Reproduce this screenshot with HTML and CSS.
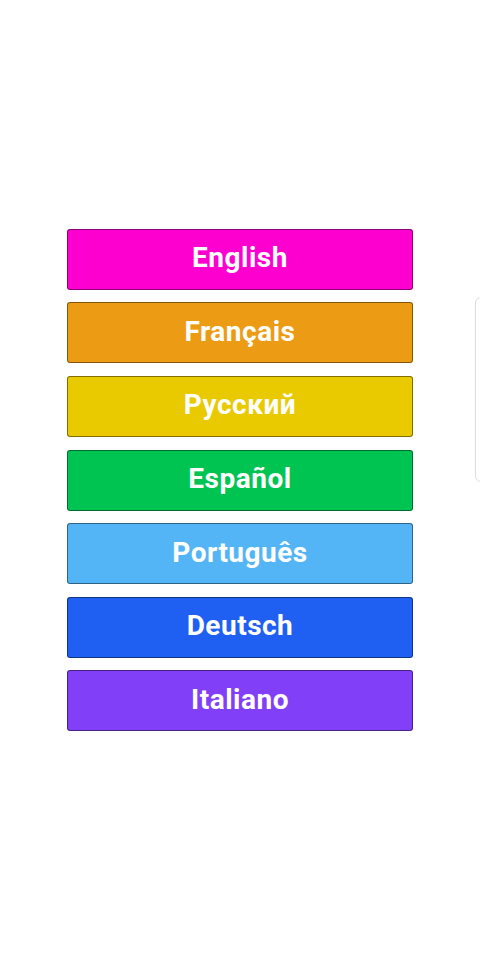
FILE: index.html
```html
<!DOCTYPE html>
<html lang="en">
<head>
    <meta charset="UTF-8">
    <meta name="viewport" content="width=device-width, initial-scale=1.0">
    <title>Language</title>
    <link rel="stylesheet" href="styles.css">
</head>
<body>
    <!-- language list -->
    <div class="lang-list">
        <a href="#" class="lang-btn pink">English</a>
        <a href="#" class="lang-btn orange">Français</a>
        <a href="#" class="lang-btn yellow">Русский</a>
        <a href="#" class="lang-btn green">Español</a>
        <a href="#" class="lang-btn sky">Português</a>
        <a href="#" class="lang-btn blue">Deutsch</a>
        <a href="#" class="lang-btn purple">Italiano</a>
    </div>

    <!-- edge panel handle -->
    <div class="edge-handle"></div>
</body>
</html>
```

FILE: styles.css
```css
body {
    font-family: Roboto, "Liberation Sans", Arial, sans-serif;
    margin: 0;
    padding: 0;
    background-color: #fff;
    height: 960px;
    overflow: hidden;
}
.lang-list {
    height: 960px;
    display: flex;
    flex-direction: column;
    justify-content: center;
    align-items: center;
    gap: 12.67px;
}
.lang-btn {
    display: flex;
    justify-content: center;
    align-items: center;
    width: 346px;
    height: 61px;
    box-sizing: border-box;
    border: 1px solid rgba(0, 0, 0, 0.45);
    border-radius: 3px;
    color: #fff;
    font-weight: bold;
    font-size: 28px;
    letter-spacing: 0.5px;
    text-decoration: none;
    padding-bottom: 3px;
}
.pink { background-color: #fd00d0; }
.orange { background-color: #ec9c14; }
.yellow { background-color: #e9ca00; }
.green { background-color: #00c452; }
.sky { background-color: #54b5f6; }
.blue { background-color: #1f5ff2; }
.purple { background-color: #8140f8; }
.edge-handle {
    position: absolute;
    left: 475px;
    top: 297px;
    width: 20px;
    height: 185px;
    box-sizing: border-box;
    border: 1px solid #dcdcdc;
    border-radius: 6px;
    background-color: #fff;
}
```
